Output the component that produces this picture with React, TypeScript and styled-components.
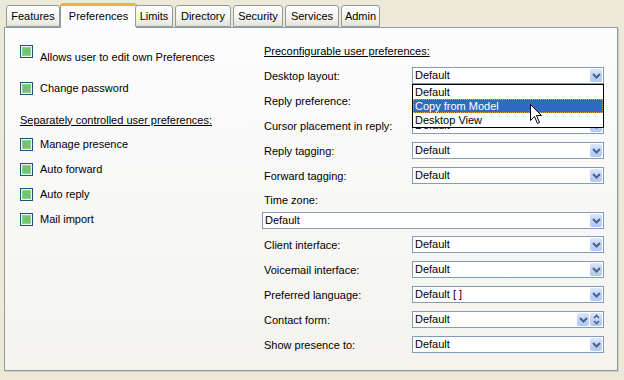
import React from "react";
import styled, { createGlobalStyle } from "styled-components";

const GlobalStyle = createGlobalStyle`
  html, body {
    margin: 0;
    padding: 0;
    background: #ece9d8;
  }
  body {
    font-family: "Liberation Sans", Arial, sans-serif;
    font-size: 11px;
    color: #000;
  }
`;

// tab label + width in px, as laid out in the original dialog
const tabs: [string, number][] = [
  ["Features", 54],
  ["Preferences", 77],
  ["Limits", 38],
  ["Directory", 56],
  ["Security", 50],
  ["Services", 54],
  ["Admin", 39],
];

const Window = styled.div`
  width: 624px;
  height: 380px;
  padding: 3px 0 0 4px;
  box-sizing: border-box;
`;

const TabStrip = styled.div`
  display: flex;
  align-items: flex-end;
  height: 24px;
  padding-left: 2px;
  position: relative;
  z-index: 2;
`;

const Tab = styled.div<{ $active?: boolean; $w: number }>`
  box-sizing: border-box;
  width: ${(p) => p.$w}px;
  height: ${(p) => (p.$active ? "25px" : "22px")};
  margin: ${(p) => (p.$active ? "0 -2px -1px -2px" : "0 2px 0 0")};
  padding-top: ${(p) => (p.$active ? "3px" : "3px")};
  text-align: center;
  border: 1px solid #919b9c;
  border-bottom: ${(p) => (p.$active ? "none" : "1px solid #919b9c")};
  border-top: ${(p) => (p.$active ? "3px solid #f7b03a" : "1px solid #919b9c")};
  border-radius: 3px 3px 0 0;
  background: ${(p) =>
    p.$active
      ? "#fcfcfe"
      : "linear-gradient(to bottom, #ffffff 0%, #f3f3ef 60%, #e4e3dc 100%)"};
  line-height: 14px;
  white-space: nowrap;
`;

const Panel = styled.div`
  box-sizing: border-box;
  width: 614px;
  height: 344px;
  border: 1px solid #919b9c;
  box-shadow: 1px 1px 0 #d0cebf;
  background: linear-gradient(to bottom, #fcfcfe 0%, #f4f3ee 100%);
  display: grid;
  grid-template-columns: 242px 342px;
  padding: 10px 0 0 15px;
`;

const Column = styled.div`
  display: flex;
  flex-direction: column;
`;

const CheckRow = styled.div<{ $first?: boolean }>`
  display: flex;
  align-items: ${(p) => (p.$first ? "flex-start" : "center")};
  gap: 7px;
  height: ${(p) => (p.$first ? "38px" : "25px")};
  padding-top: ${(p) => (p.$first ? "7px" : "0")};
  box-sizing: border-box;
`;

const CheckLabel = styled.span<{ $first?: boolean }>`
  line-height: 13px;
  margin-top: ${(p) => (p.$first ? "6px" : "0")};
`;

const Box = styled.span`
  box-sizing: border-box;
  width: 13px;
  height: 13px;
  border: 1px solid #1c5180;
  background: #f4f4f0;
  display: flex;
  align-items: center;
  justify-content: center;
  flex: none;
`;

const Fill = styled.span`
  width: 7px;
  height: 7px;
  background: #73c373;
  box-shadow: 0 0 0 1px #8fd08c;
`;

const Heading = styled.div<{ $indent?: number }>`
  height: 25px;
  display: flex;
  align-items: center;
  padding-left: ${(p) => p.$indent ?? 0}px;
  margin-top: ${(p) => (p.$indent ? 0 : 6)}px;
  text-decoration: underline;
`;

const FieldRow = styled.div`
  position: relative;
  display: grid;
  grid-template-columns: 150px 192px;
  align-items: center;
  height: 25px;
`;

const FieldLabel = styled.span`
  padding-left: 2px;
`;

const ZoneLabel = styled.div`
  height: 24px;
  padding: 6px 0 0 2px;
  box-sizing: border-box;
  line-height: 13px;
`;

const ZoneRow = styled.div`
  height: 20px;
  display: flex;
  align-items: flex-start;
`;

const SelectBox = styled.div<{ $wide?: boolean }>`
  box-sizing: border-box;
  width: ${(p) => (p.$wide ? "342px" : "192px")};
  height: 17px;
  border: 1px solid #7f9db9;
  background: #fff;
  display: flex;
  align-items: center;
  padding: 0 1px 0 2px;
`;

const SelectText = styled.span`
  flex: 1;
  line-height: 13px;
`;

const ArrowButton = styled.span`
  box-sizing: border-box;
  width: 12px;
  height: 13px;
  margin-left: 1px;
  border-radius: 2px;
  background: linear-gradient(to bottom, #dbe6fd 0%, #c1d3fb 50%, #b0c6f5 100%);
  display: flex;
  align-items: center;
  justify-content: center;
`;

const Chevron = () => (
  <svg width="9" height="6" viewBox="0 0 9 6">
    <polyline
      points="1,1 4.5,4.5 8,1"
      fill="none"
      stroke="#4d6185"
      strokeWidth="2"
    />
  </svg>
);

const Spin = () => (
  <svg width="7" height="11" viewBox="0 0 7 11">
    <polyline points="1,4 3.5,1.5 6,4" fill="none" stroke="#4d6185" strokeWidth="1.6" />
    <polyline points="1,7 3.5,9.5 6,7" fill="none" stroke="#4d6185" strokeWidth="1.6" />
  </svg>
);

const Select: React.FC<{ value?: string; wide?: boolean; spin?: boolean }> = ({
  value = "Default",
  wide,
  spin,
}) => (
  <SelectBox $wide={wide}>
    <SelectText>{value}</SelectText>
    <ArrowButton>
      <Chevron />
    </ArrowButton>
    {spin && (
      <ArrowButton>
        <Spin />
      </ArrowButton>
    )}
  </SelectBox>
);

const DropList = styled.div`
  position: absolute;
  left: 150px;
  top: 21px;
  width: 192px;
  box-sizing: border-box;
  border: 1px solid #000;
  background: #fff;
  z-index: 5;
`;

const DropItem = styled.div<{ $selected?: boolean }>`
  height: 14px;
  line-height: 12px;
  box-sizing: border-box;
  padding-left: 1px;
  color: ${(p) => (p.$selected ? "#fff" : "#000")};
  background: ${(p) => (p.$selected ? "#316ac5" : "transparent")};
  border: 1px dotted ${(p) => (p.$selected ? "#e6a24a" : "transparent")};
`;

const Pointer = styled.svg`
  position: absolute;
  left: 117px;
  top: 19px;
`;

const Check: React.FC<{ label: string; first?: boolean }> = ({ label, first }) => (
  <CheckRow $first={first}>
    <Box>
      <Fill />
    </Box>
    <CheckLabel $first={first}>{label}</CheckLabel>
  </CheckRow>
);

const fieldsTop = ["Reply preference:", "Cursor placement in reply:", "Reply tagging:", "Forward tagging:"];

const fieldsBottom: { label: string; value?: string; spin?: boolean }[] = [
  { label: "Client interface:" },
  { label: "Voicemail interface:" },
  { label: "Preferred language:", value: "Default [ ]" },
  { label: "Contact form:", spin: true },
  { label: "Show presence to:" },
];

export default function App() {
  return (
    <>
      <GlobalStyle />
      <Window>
        <TabStrip>
          {tabs.map(([t, w]) => (
            <Tab key={t} $w={w} $active={t === "Preferences"}>
              {t}
            </Tab>
          ))}
        </TabStrip>
        <Panel>
          <Column>
            <Check first label="Allows user to edit own Preferences" />
            <Check label="Change password" />
            <Heading $indent={0}>Separately controlled user preferences:</Heading>
            <Check label="Manage presence" />
            <Check label="Auto forward" />
            <Check label="Auto reply" />
            <Check label="Mail import" />
          </Column>
          <Column>
            <Heading $indent={2}>Preconfigurable user preferences:</Heading>
            <FieldRow>
              <FieldLabel>Desktop layout:</FieldLabel>
              <Select />
              <DropList>
                <DropItem>Default</DropItem>
                <DropItem $selected>Copy from Model</DropItem>
                <DropItem>Desktop View</DropItem>
                <Pointer width="13" height="21" viewBox="0 0 13 21">
                  <path
                    d="M0.5,0.5 L0.5,16.5 L4.5,12.5 L7.5,19.5 L9.5,18.5 L6.5,11.5 L11.5,11.5 Z"
                    fill="#fff"
                    stroke="#000"
                    strokeWidth="1"
                  />
                </Pointer>
              </DropList>
            </FieldRow>
            {fieldsTop.map((f) => (
              <FieldRow key={f}>
                <FieldLabel>{f}</FieldLabel>
                <Select />
              </FieldRow>
            ))}
            <ZoneLabel>Time zone:</ZoneLabel>
            <ZoneRow>
              <Select wide />
            </ZoneRow>
            {fieldsBottom.map((f) => (
              <FieldRow key={f.label}>
                <FieldLabel>{f.label}</FieldLabel>
                <Select value={f.value} spin={f.spin} />
              </FieldRow>
            ))}
          </Column>
        </Panel>
      </Window>
    </>
  );
}
